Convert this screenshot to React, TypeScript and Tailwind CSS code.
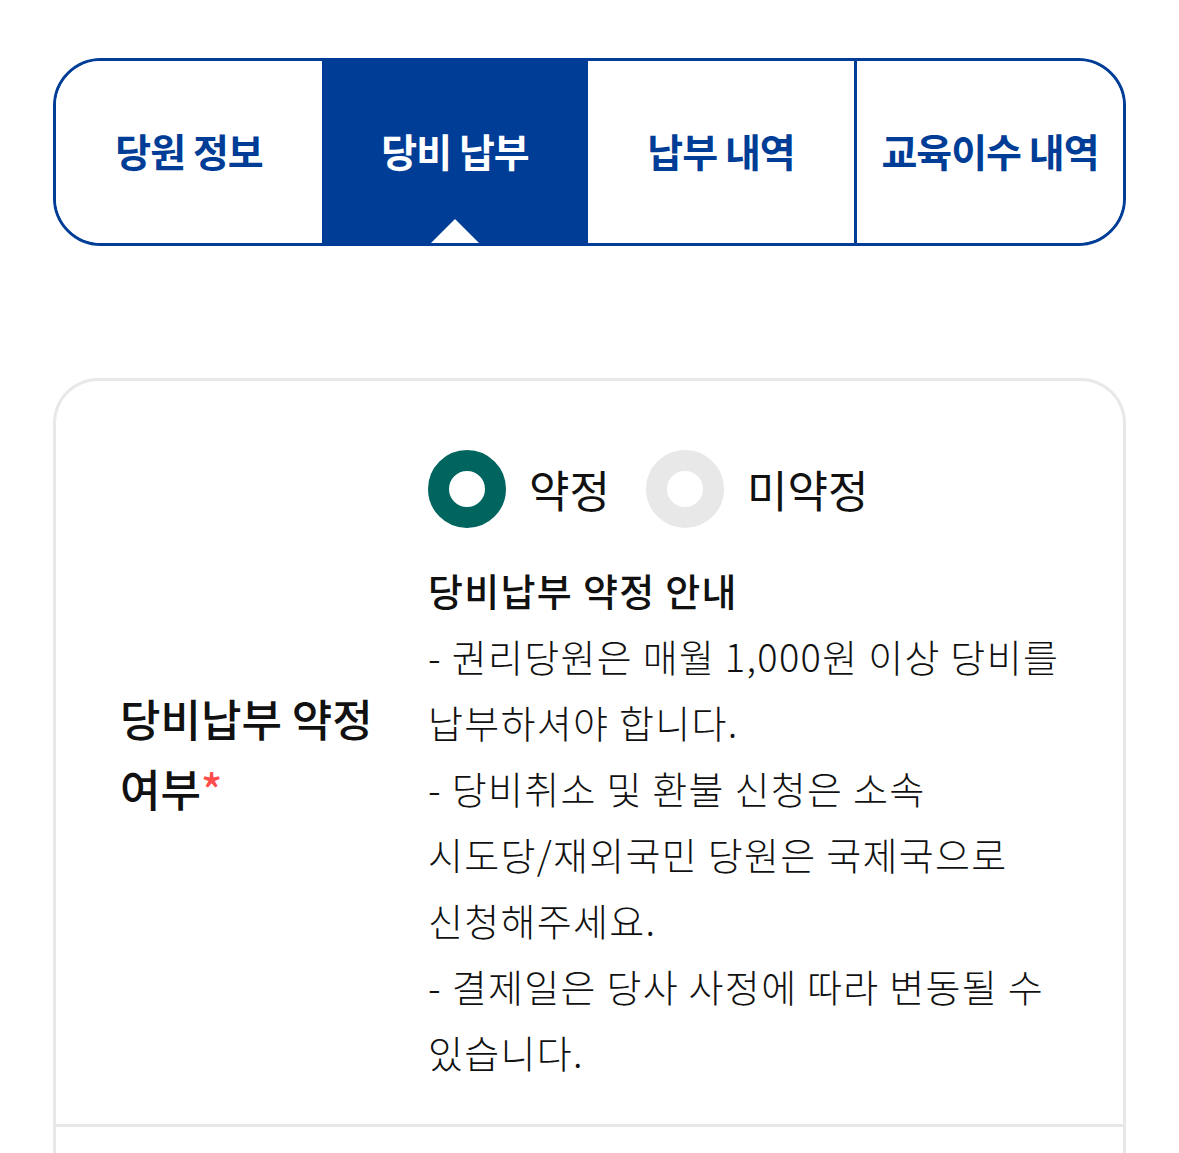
import { useState } from "react";

const tabs = ["당원 정보", "당비 납부", "납부 내역", "교육이수 내역"];

function Radio({ checked, label, onClick }: { checked: boolean; label: string; onClick: () => void }) {
  return (
    <button type="button" onClick={onClick} className="flex items-center gap-[23px]">
      <span
        className={`block size-[78px] rounded-full border-[21px] bg-white ${
          checked ? "border-[#00645f]" : "border-[#e8e8e8]"
        }`}
      ></span>
      <span className="text-[44px] leading-none text-[#111]">{label}</span>
    </button>
  );
}

export default function App() {
  const [active, setActive] = useState(1);
  const [agree, setAgree] = useState(true);

  return (
    <div
      className="min-h-screen bg-white px-[53px] pt-[58px] break-keep"
      style={{ fontFamily: '"Noto Sans CJK KR", "Noto Sans", sans-serif' }}
    >
      <div className="flex h-[188px] overflow-hidden rounded-[48px] border-[3px] border-[#003d96]">
        {tabs.map((tab, index) => (
          <button
            type="button"
            key={tab}
            onClick={() => setActive(index)}
            className={`relative flex flex-1 items-center justify-center pb-[4px] text-[39px] font-bold tracking-[-1px] ${
              index === active ? "bg-[#003d96] text-white" : "bg-white text-[#003d96]"
            } ${index > 0 && index !== active && index - 1 !== active ? "border-l-[3px] border-[#003d96]" : ""}`}
          >
            {tab}
            {index === active && (
              <span className="absolute bottom-0 left-1/2 -translate-x-1/2 border-x-[24px] border-b-[24px] border-x-transparent border-b-white"></span>
            )}
          </button>
        ))}
      </div>

      <div className="mt-[132px] rounded-t-[45px] border-[3px] border-b-0 border-[#e8e8e8]">
        <div className="flex border-b-[3px] border-[#e8e8e8]">
          <div className="flex w-[372px] shrink-0 items-center pl-[64px] pr-[16px]">
            <div className="text-[44px] font-medium leading-[70px] text-[#111]">
              당비납부 약정 여부<span className="text-[#ff4d4d]">*</span>
            </div>
          </div>

          <div className="flex-1 pb-[39px] pr-[50px] pt-[69px]">
            <div className="flex items-center gap-[36px]">
              <Radio checked={agree} label="약정" onClick={() => setAgree(true)} />
              <Radio checked={!agree} label="미약정" onClick={() => setAgree(false)} />
            </div>

            <div className="mt-[29px] text-[38px] leading-[66px] tracking-[1.3px] text-[#111]">
              <div className="font-medium">당비납부 약정 안내</div>
              <p className="font-light">- 권리당원은 매월 1,000원 이상 당비를 납부하셔야 합니다.</p>
              <p className="font-light">
                - 당비취소 및 환불 신청은 소속 <span className="whitespace-nowrap">시도당/재외국민</span> 당원은
                국제국으로 신청해주세요.
              </p>
              <p className="font-light">- 결제일은 당사 사정에 따라 변동될 수 있습니다.</p>
            </div>
          </div>
        </div>
        <div className="h-[120px]"></div>
      </div>
    </div>
  );
}
